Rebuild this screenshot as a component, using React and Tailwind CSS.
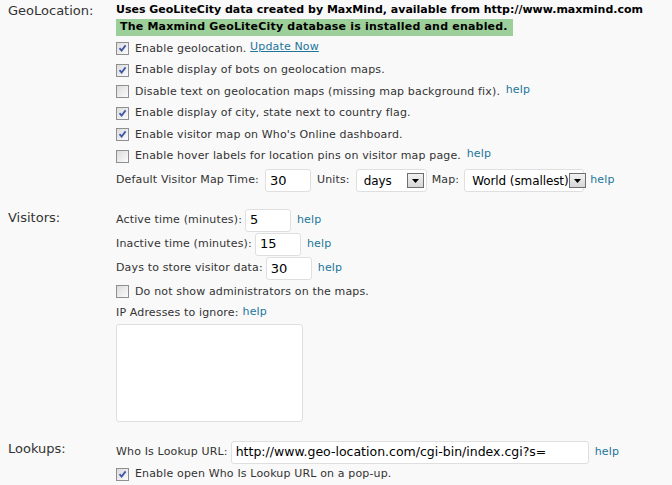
import React from "react";

const font = { fontFamily: '"DejaVu Sans", Verdana, sans-serif' };

function Check({ checked }) {
  return (
    <span className="inline-block w-[13px] h-[13px] border border-[#8f8f8f] bg-gradient-to-br from-[#dcdcdc] to-[#fbfbfb] shrink-0 relative">
      {checked && (
        <svg viewBox="0 0 11 11" className="absolute left-0 top-0 w-[11px] h-[11px]">
          <path d="M2.5 5.2 L4.6 7.6 L8.6 2.4" fill="none" stroke="#3f57a8" strokeWidth="1.8" />
        </svg>
      )}
    </span>
  );
}

function Help({ className = "" }) {
  return <span className={"text-[#21759b] " + className}>help</span>;
}

function CheckRow({ checked, children }) {
  return (
    <div className="flex items-center h-[21.5px] gap-[6px]">
      <Check checked={checked} />
      <span>{children}</span>
    </div>
  );
}

function Input({ value, w }) {
  return (
    <span className={"inline-flex items-center h-[23px] bg-white border border-[#dfdfdf] rounded-[3px] pl-[4px] text-[13px] tracking-normal text-black " + w}>
      {value}
    </span>
  );
}

function Select({ value, w, pl = "pl-[7px]" }) {
  return (
    <span className={"inline-flex items-center justify-between h-[23px] bg-white border border-[#dfdfdf] rounded-[3px] pr-[2px] text-[12px] tracking-[-0.1px] text-black " + pl + " " + w}>
      <span className="whitespace-nowrap">{value}</span>
      <span className="w-[17px] h-[15px] border border-[#6e6e6e] bg-gradient-to-b from-[#f2f2f2] to-[#d6d6d6] flex items-center justify-center shrink-0">
        <svg viewBox="0 0 7 4" className="w-[7px] h-[4px]"><path d="M0 0 H7 L3.5 4 Z" fill="#000" /></svg>
      </span>
    </span>
  );
}

export default function App() {
  return (
    <div className="w-[672px] h-[485px] bg-[#f9f9f9] text-[#333] text-[11px] tracking-[0.15px] overflow-hidden" style={font}>
      <div className="grid grid-cols-[116px_1fr]">
        {/* GeoLocation */}
        <div className="pl-[8px] pt-[1px] text-[13px] tracking-normal">GeoLocation:</div>
        <div className="pt-[2px]">
          <div className="font-bold text-black h-[17px] flex items-center whitespace-nowrap tracking-normal">
            Uses GeoLiteCity data created by MaxMind, available from http://www.maxmind.com
          </div>
          <div className="font-bold text-black bg-[#9ccf99] h-[17px] flex items-center pl-[4px] w-[397px] whitespace-nowrap tracking-[0.2px]">
            The Maxmind GeoLiteCity database is installed and enabled.
          </div>
          <div className="h-[2px]" />
          <CheckRow checked>
            Enable geolocation. <span className="text-[#21759b] underline relative top-[-2px]">Update Now</span>
          </CheckRow>
          <CheckRow checked>Enable display of bots on geolocation maps.</CheckRow>
          <CheckRow>
            Disable text on geolocation maps (missing map background fix). <Help className="relative top-[-2px] ml-[2px]" />
          </CheckRow>
          <CheckRow checked>Enable display of city, state next to country flag.</CheckRow>
          <CheckRow checked>Enable visitor map on Who's Online dashboard.</CheckRow>
          <CheckRow>
            Enable hover labels for location pins on visitor map page. <Help className="relative top-[-2px] ml-[2px]" />
          </CheckRow>
          <div className="flex items-center h-[25px] mt-[1px]">
            <span>Default Visitor Map Time:</span>
            <Input value="30" w="w-[46px] ml-[6px]" />
            <span className="ml-[6px]">Units:</span>
            <Select value="days" w="w-[71px] ml-[6px]" />
            <span className="ml-[5px]">Map:</span>
            <Select value="World (smallest)" pl="pl-[7px]" w="w-[120px] ml-[5px]" />
            <Help className="ml-[6px]" />
          </div>
        </div>

        {/* Visitors */}
        <div className="pl-[8px] pt-[15px] text-[13px] tracking-normal">Visitors:</div>
        <div className="pt-[15px]">
          <div className="flex items-center h-[24px]">
            <span>Active time (minutes):</span>
            <Input value="5" w="w-[46px] ml-[3px]" />
            <Help className="ml-[6px]" />
          </div>
          <div className="flex items-center h-[24px]">
            <span>Inactive time (minutes):</span>
            <Input value="15" w="w-[46px] ml-[3px]" />
            <Help className="ml-[6px]" />
          </div>
          <div className="flex items-center h-[25px]">
            <span>Days to store visitor data:</span>
            <Input value="30" w="w-[46px] ml-[3px]" />
            <Help className="ml-[6px]" />
          </div>
          <CheckRow>Do not show administrators on the maps.</CheckRow>
          <div className="flex items-center h-[21px]">
            <span>IP Adresses to ignore:</span>
            <Help className="ml-[4px] relative top-[-1px]" />
          </div>
          <div className="w-[187px] h-[98px] bg-white border border-[#dfdfdf] rounded-[3px]" />
        </div>

        {/* Lookups */}
        <div className="pl-[8px] pt-[17px] text-[13px] tracking-normal">Lookups:</div>
        <div className="pt-[19px]">
          <div className="flex items-center h-[23px]">
            <span>Who Is Lookup URL:</span>
            <span className="inline-flex items-center h-[23px] w-[358px] ml-[3px] bg-white border border-[#dfdfdf] rounded-[3px] pl-[4px] text-[12.5px] tracking-normal text-black whitespace-nowrap">
              http://www.geo-location.com/cgi-bin/index.cgi?s=
            </span>
            <Help className="ml-[6px]" />
          </div>
          <CheckRow checked>Enable open Who Is Lookup URL on a pop-up.</CheckRow>
        </div>
      </div>
    </div>
  );
}
